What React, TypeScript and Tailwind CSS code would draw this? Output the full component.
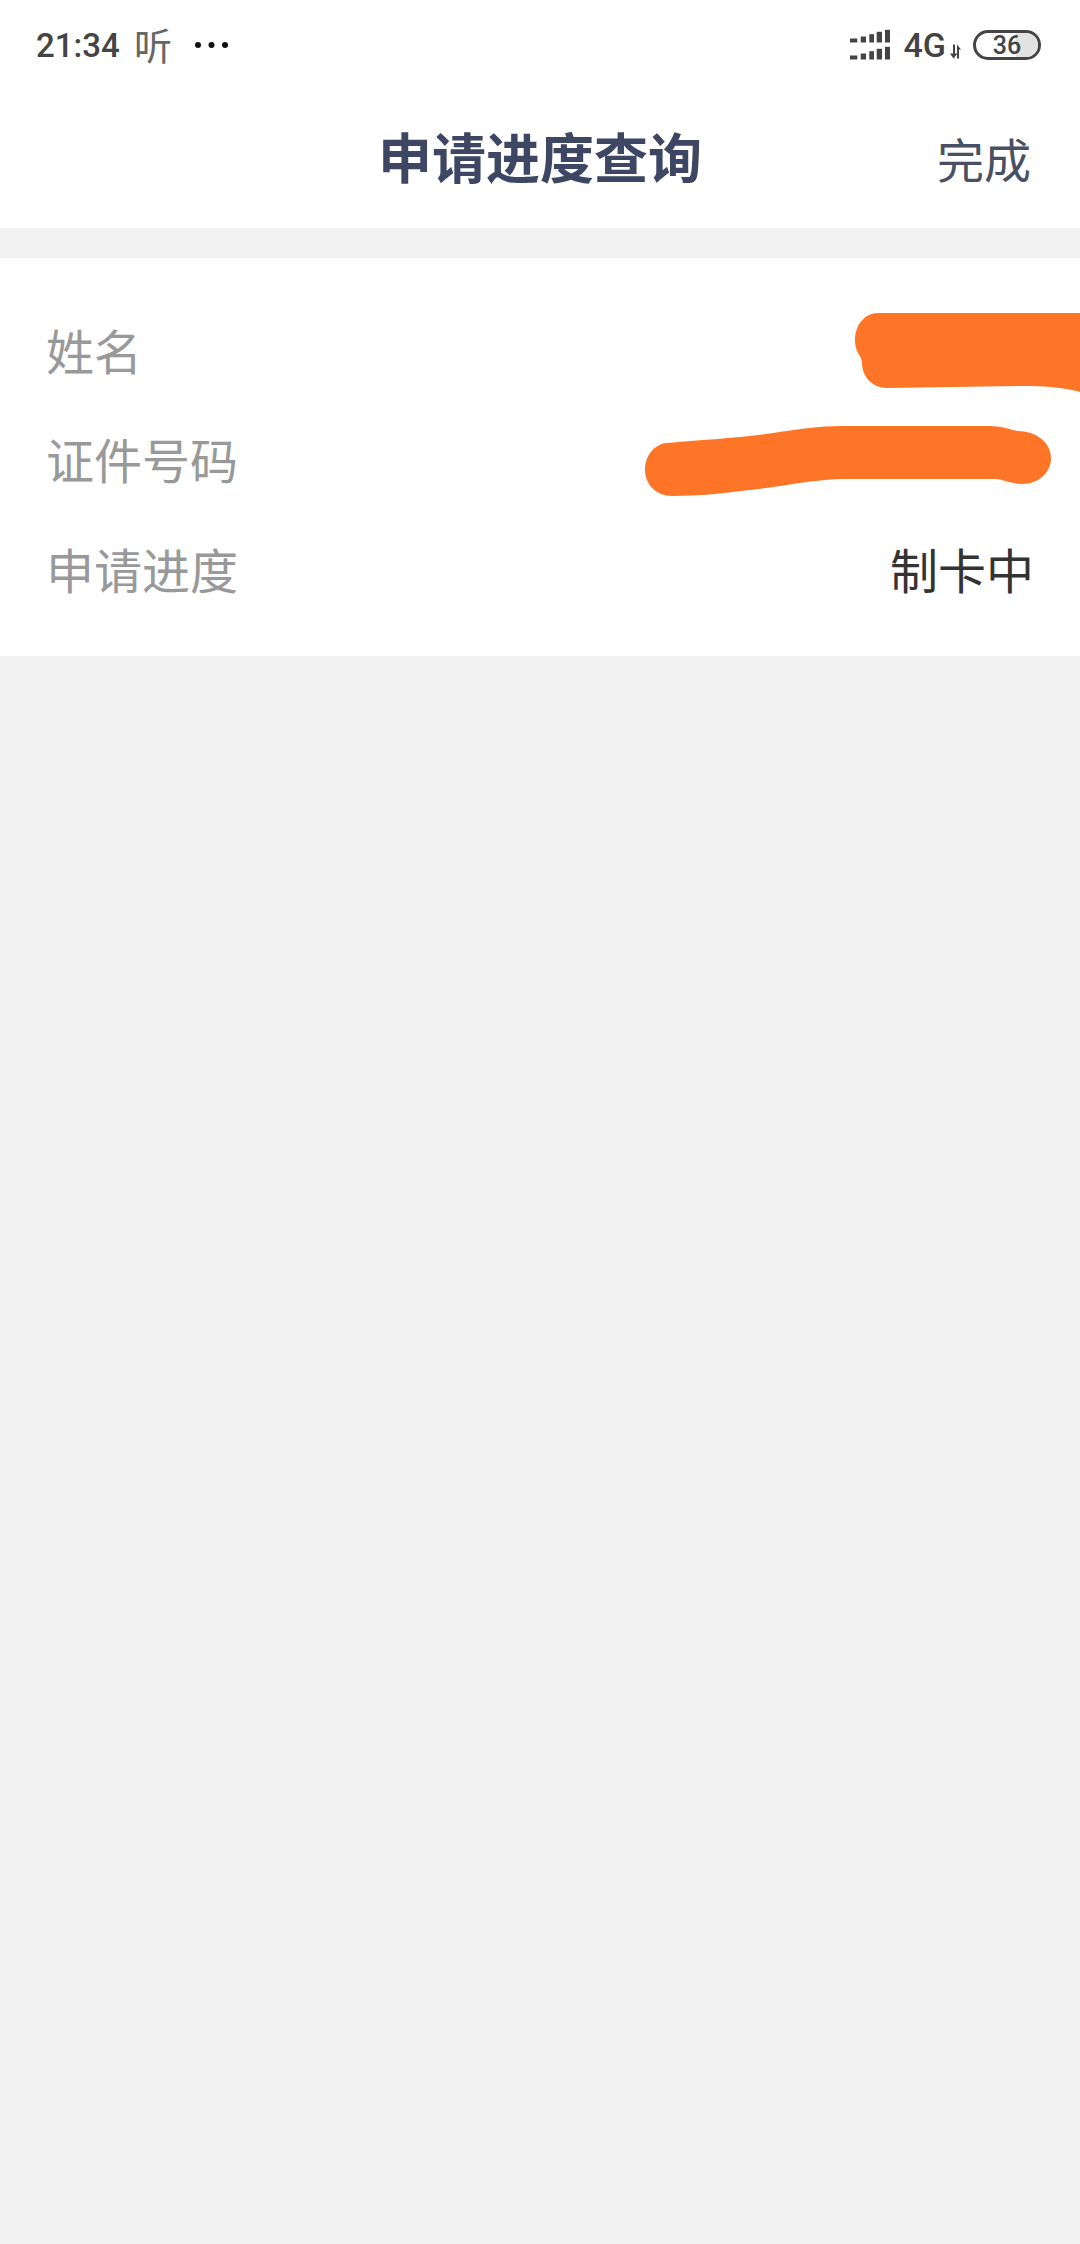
import React from 'react';

const rows = [
  { label: '姓名', value: '' },
  { label: '证件号码', value: '' },
  { label: '申请进度', value: '制卡中' },
];

function SignalIcon() {
  const bars = [
    [0, 7.3, 4],
    [10.7, 5.3, 6],
    [19.3, 4.7, 8.3],
    [26.7, 5.3, 10.7],
    [35, 5, 12.7],
  ];
  return (
    <svg width="41" height="32" viewBox="0 0 41 32" fill="#444">
      {bars.map(([x, w, h]) => (
        <g key={x}>
          <rect x={x} y={13.5 - h} width={w} height={h} />
          <rect x={x} y={30.5 - h} width={w} height={h} />
        </g>
      ))}
    </svg>
  );
}

function StatusBar() {
  return (
    <div className="h-[90px] flex items-center justify-between pl-[36px] pr-[39px] font-['Roboto',sans-serif] text-[#444]">
      <div className="flex items-center">
        <span className="text-[33px] leading-none font-medium w-[98px]">21:34</span>
        <span className="text-[38px] leading-none text-[#666] font-['Noto_Sans_CJK_SC',sans-serif] w-[60px] -mt-[2px]">听</span>
        <svg width="34" height="8" viewBox="0 0 34 8" fill="#111">
          <circle cx="4" cy="4" r="3" />
          <circle cx="17.5" cy="4" r="3" />
          <circle cx="31" cy="4" r="3" />
        </svg>
      </div>
      <div className="flex items-center">
        <SignalIcon />
        <span className="ml-[13px] text-[34px] leading-none font-medium">4G</span>
        <svg width="14" height="15" viewBox="0 0 14 14" className="ml-[3px] mt-[13px]" fill="#444">
          <path d="M4 0h2v9h2.5L4.5 14 1 9h3zM8 0l4 5h-2v9H8z" />
        </svg>
        <div className="relative ml-[10px] w-[68px] h-[30px] rounded-full border-[3px] border-[#444] flex items-center justify-center overflow-hidden">
          <div className="absolute right-0 top-0 bottom-0 w-[22px] bg-[#e2e2e2]" />
          <span className="relative text-[25px] leading-none font-medium text-[#444]">36</span>
        </div>
      </div>
    </div>
  );
}

export default function App() {
  return (
    <div className="min-h-[2244px] bg-[#f1f1f1] font-['Noto_Sans_CJK_SC',sans-serif]">
      <div className="bg-white h-[228px]">
        <StatusBar />
        <div className="relative h-[138px] flex items-center justify-center pb-[6px]">
          <h1 className="text-[54px] leading-none font-bold text-[#3d4663]">申请进度查询</h1>
          <span className="absolute right-[49px] top-[44px] text-[47px] leading-none text-[#4a5064]">完成</span>
        </div>
      </div>

      <div className="relative mt-[30px] bg-white h-[398px] pt-[36px]">
        {rows.map((row) => (
          <div key={row.label} className="h-[109.5px] flex items-center justify-between pl-[46px] pr-[46px] text-[48px] leading-none">
            <span className="text-[#999]">{row.label}</span>
            <span className="text-[#333]">{row.value}</span>
          </div>
        ))}

        {/* redaction scribbles */}
        <svg className="absolute inset-0 w-full h-full" viewBox="0 258 1080 398" fill="#ff7527">
          <path d="M878 313 L1080 313 L1080 392 C1062 387 1045 386 1020 386 L887 388 C872 388 862 376 862 363 C862 359 860 356 858 353 C856 349 855 345 855 340 C855 325 865 313 878 313 Z" />
          <path d="M667 443 C700 440 740 438 773 433 C800 429 820 426 840 426 L990 426 C1000 426 1010 429 1017 431 C1037 431 1051 443 1051 458 C1051 473 1038 484 1022 484 C1012 484 1005 480 997 479 L840 479 C810 480 780 487 750 490 C725 493 700 496 672 496 C656 496 645 484 645 470 C645 456 654 444 667 443 Z" />
        </svg>
      </div>
    </div>
  );
}
